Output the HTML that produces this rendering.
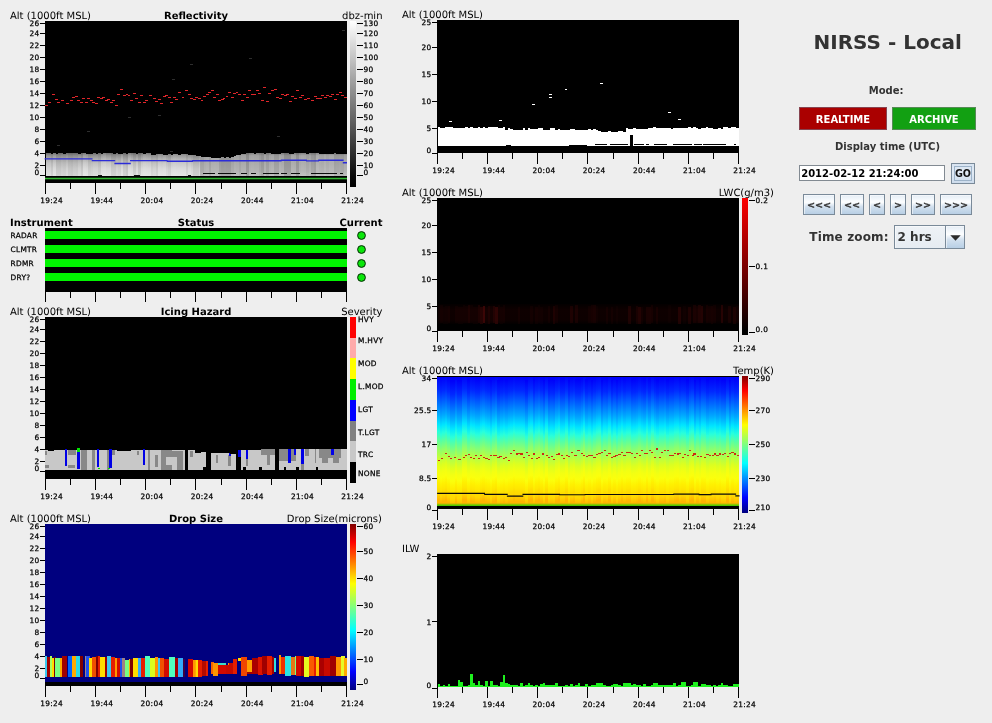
<!DOCTYPE html>
<html lang="en"><head><meta charset="utf-8"><title>NIRSS - Local</title>
<style>
html,body{margin:0;padding:0;background:#eee;}
body{width:992px;height:723px;overflow:hidden;position:relative;font-family:'DejaVu Sans','Liberation Sans',sans-serif;}
#app{position:absolute;left:0;top:0;width:992px;height:723px;background:#eee;overflow:hidden;will-change:transform;}
#plots{position:absolute;left:0;top:0;}
svg text{font-family:'DejaVu Sans','Liberation Sans',sans-serif;fill:#000;}
.tt{font-size:10px;}
.tb{font-size:10px;font-weight:bold;}
.tk{font-size:7.4px;letter-spacing:0.3px;stroke:#000;stroke-width:0.25px;}
#ctl{position:absolute;left:790px;top:0;width:202px;height:260px;color:#333;font-weight:bold;}
#ctl *{box-sizing:border-box;}
.abs{position:absolute;white-space:nowrap;}
h1.abs{margin:0;font-size:20px;line-height:24px;font-weight:bold;color:#333;}
.lbl{font-size:10px;line-height:12px;}
.mode{height:23px;border:1px solid #857585;color:#fff;font-size:10px;line-height:20px;padding-top:1.5px;text-align:center;}
.btn{border:1px solid #7a8a99;background:linear-gradient(#e4edf6 0%,#fdfeff 38%,#d2e0ee 62%,#b8cfe5 100%);
 box-shadow:inset 1px 1px 0 rgba(255,255,255,0.55);font-size:9.6px;line-height:18px;text-align:center;color:#333;font-weight:bold;padding:0;}
.nv{display:inline-block;transform:translateY(1.1px) scaleY(0.92);-webkit-text-stroke:0.3px #333;}
.go{background:linear-gradient(#d8e4f1,#e2ebf5 45%,#cddcec);box-shadow:none;color:#111;}
.tf{border:1px solid #828a92;background:#fff;font-size:10px;line-height:13px;color:#000;font-weight:bold;padding:0.9px 0 0 1.2px;}
</style></head>
<body>
<div id="app">
<svg id="plots" width="992" height="723" viewBox="0 0 992 723" shape-rendering="crispEdges" text-rendering="geometricPrecision">
<defs>
<linearGradient id="gcloud" x1="0" y1="153" x2="0" y2="175.6" gradientUnits="userSpaceOnUse">
<stop offset="0" stop-color="#6e6e6e"/><stop offset="0.1" stop-color="#929292"/><stop offset="0.25" stop-color="#aeaeae"/><stop offset="0.45" stop-color="#c8c8c8"/><stop offset="0.7" stop-color="#dadada"/><stop offset="1" stop-color="#e4e4e4"/></linearGradient>
<linearGradient id="ggrey" x1="0" y1="0" x2="0" y2="1"><stop offset="0" stop-color="#fff"/><stop offset="0.94" stop-color="#080808"/><stop offset="1" stop-color="#000"/></linearGradient>
<linearGradient id="gjet" x1="0" y1="0" x2="0" y2="1">
<stop offset="0" stop-color="#800000"/><stop offset="0.11" stop-color="#ff0000"/><stop offset="0.36" stop-color="#ffff00"/><stop offset="0.5" stop-color="#80ff80"/><stop offset="0.64" stop-color="#00ffff"/><stop offset="0.89" stop-color="#0000ff"/><stop offset="1" stop-color="#000080"/></linearGradient>
<linearGradient id="gred" x1="0" y1="0" x2="0" y2="1"><stop offset="0" stop-color="#ff0000"/><stop offset="0.97" stop-color="#000"/><stop offset="1" stop-color="#000"/></linearGradient>
<linearGradient id="glwc" x1="0" y1="0" x2="0" y2="1"><stop offset="0" stop-color="#030000"/><stop offset="0.3" stop-color="#0e0000"/><stop offset="0.8" stop-color="#0d0000"/><stop offset="1" stop-color="#040000"/></linearGradient>
<linearGradient id="gtemp" x1="0" y1="0" x2="0" y2="1"><stop offset="0.003" stop-color="#0000fa"/><stop offset="0.11" stop-color="#0028ff"/><stop offset="0.216" stop-color="#006eff"/><stop offset="0.306" stop-color="#00aaff"/><stop offset="0.382" stop-color="#00e6ff"/><stop offset="0.444" stop-color="#28ffdc"/><stop offset="0.504" stop-color="#5affa0"/><stop offset="0.565" stop-color="#8cff6e"/><stop offset="0.625" stop-color="#b4ff46"/><stop offset="0.687" stop-color="#dcff20"/><stop offset="0.745" stop-color="#f3ff12"/><stop offset="0.79" stop-color="#fbff0c"/><stop offset="0.843" stop-color="#fff000"/><stop offset="0.882" stop-color="#ffe600"/><stop offset="0.905" stop-color="#ffdc00"/><stop offset="0.93" stop-color="#ffd800"/><stop offset="0.96" stop-color="#ffc300"/><stop offset="0.98" stop-color="#ffb400"/><stop offset="1" stop-color="#ffb400"/></linearGradient>
<linearGradient id="gtempu" x1="0" y1="377.4" x2="0" y2="505" gradientUnits="userSpaceOnUse"><stop offset="0.003" stop-color="#0000fa"/><stop offset="0.11" stop-color="#0028ff"/><stop offset="0.216" stop-color="#006eff"/><stop offset="0.306" stop-color="#00aaff"/><stop offset="0.382" stop-color="#00e6ff"/><stop offset="0.444" stop-color="#28ffdc"/><stop offset="0.504" stop-color="#5affa0"/><stop offset="0.565" stop-color="#8cff6e"/><stop offset="0.625" stop-color="#b4ff46"/><stop offset="0.687" stop-color="#dcff20"/><stop offset="0.745" stop-color="#f3ff12"/><stop offset="0.79" stop-color="#fbff0c"/><stop offset="0.843" stop-color="#fff000"/><stop offset="0.882" stop-color="#ffe600"/><stop offset="0.905" stop-color="#ffdc00"/><stop offset="0.93" stop-color="#ffd800"/><stop offset="0.96" stop-color="#ffc300"/><stop offset="0.98" stop-color="#ffb400"/><stop offset="1" stop-color="#ffb400"/></linearGradient>
<clipPath id="ctemp"><rect x="437" y="377.4" width="302" height="127.6"/></clipPath>
<linearGradient id="ggf" x1="0" y1="0" x2="0" y2="1"><stop offset="0" stop-color="#78c800" stop-opacity="0"/><stop offset="1" stop-color="#64c800" stop-opacity="1"/></linearGradient>
<clipPath id="cc1"><rect x="45" y="140" width="155" height="40"/></clipPath><clipPath id="cc2"><rect x="200" y="140" width="147" height="40"/></clipPath>
<linearGradient id="gcloud2" x1="0" y1="153" x2="0" y2="175.6" gradientUnits="userSpaceOnUse">
<stop offset="0" stop-color="#7c7c7c"/><stop offset="0.12" stop-color="#a2a2a2"/><stop offset="0.4" stop-color="#aaaaaa"/><stop offset="0.8" stop-color="#b4b4b4"/><stop offset="1" stop-color="#c0c0c0"/></linearGradient>
</defs>
<g id="p1"><text class="tt" text-anchor="start" x="10" y="18.8">Alt (1000ft MSL)</text><text class="tb" text-anchor="middle" x="196" y="18.8">Reflectivity</text><text class="tt" text-anchor="end" x="382.5" y="18.8">dbz-min</text><rect x="45" y="21" width="302" height="161.5" fill="#000"/><polygon points="45.5,175.6 45.5,153.22 48.01,153.22 48.01,152.94 50.52,152.94 50.52,153.74 53.02,153.74 53.02,152.82 55.53,152.82 55.53,153.56 58.04,153.56 58.04,153.29 60.55,153.29 60.55,152.79 63.06,152.79 63.06,153.51 65.57,153.51 65.57,152.76 68.08,152.76 68.08,153.39 70.58,153.39 70.58,152.81 73.09,152.81 73.09,152.85 75.6,152.85 75.6,153.38 78.11,153.38 78.11,154.02 80.62,154.02 80.62,152.9 83.13,152.9 83.12,153.06 85.63,153.06 85.63,153.7 88.14,153.7 88.14,154.22 90.65,154.22 90.65,153.62 93.16,153.62 93.16,153.33 95.67,153.33 95.67,154.26 98.17,154.26 98.17,152.77 100.68,152.77 100.68,154.07 103.19,154.07 103.19,153.16 105.7,153.16 105.7,152.93 108.21,152.93 108.21,152.89 110.72,152.89 110.72,153.19 113.23,153.19 113.22,154.01 115.73,154.01 115.73,152.99 118.24,152.99 118.24,153.63 120.75,153.63 120.75,153.72 123.26,153.72 123.26,153.3 125.77,153.3 125.77,153.58 128.28,153.58 128.28,152.8 130.78,152.8 130.78,152.8 133.29,152.8 133.29,153.03 135.8,153.03 135.8,153.79 138.31,153.79 138.31,153.38 140.82,153.38 140.82,153.2 143.32,153.2 143.32,153.64 145.83,153.64 145.83,153.43 148.34,153.43 148.34,153.18 150.85,153.18 150.85,154.77 153.36,154.77 153.36,154.62 155.87,154.62 155.87,153.89 158.38,153.89 158.38,154.42 160.88,154.42 160.88,154.34 163.39,154.34 163.39,154.9 165.9,154.9 165.9,154.67 168.41,154.67 168.41,153.96 170.92,153.96 170.92,155.07 173.43,155.07 173.43,153.69 175.93,153.69 175.93,154.17 178.44,154.17 178.44,154.71 180.95,154.71 180.95,153.74 183.46,153.74 183.46,154.28 185.97,154.28 185.97,153.56 188.47,153.56 188.47,154.77 190.98,154.77 190.98,155.3 193.49,155.3 193.49,155.41 196,155.41 196,156.31 198.51,156.31 198.51,155.83 201.02,155.83 201.02,156.82 203.52,156.82 203.53,157.01 206.03,157.01 206.03,157.28 208.54,157.28 208.54,157.33 211.05,157.33 211.05,158.11 213.56,158.11 213.56,158.38 216.07,158.38 216.07,157.66 218.57,157.66 218.57,157.91 221.08,157.91 221.08,156.83 223.59,156.83 223.59,157.66 226.1,157.66 226.1,157.32 228.61,157.32 228.61,157.56 231.12,157.56 231.12,156.93 233.62,156.93 233.62,155.67 236.13,155.67 236.13,155.42 238.64,155.42 238.64,155.45 241.15,155.45 241.15,154.01 243.66,154.01 243.66,154.35 246.17,154.35 246.17,152.97 248.67,152.97 248.68,152.89 251.18,152.89 251.18,152.79 253.69,152.79 253.69,153.93 256.2,153.93 256.2,152.91 258.71,152.91 258.71,153.1 261.22,153.1 261.22,153.33 263.73,153.33 263.73,154.09 266.23,154.09 266.23,152.83 268.74,152.83 268.74,153.42 271.25,153.42 271.25,153.58 273.76,153.58 273.76,154.11 276.27,154.11 276.27,154.01 278.77,154.01 278.77,154.08 281.28,154.08 281.28,153.15 283.79,153.15 283.79,153.36 286.3,153.36 286.3,153.27 288.81,153.27 288.81,154.11 291.32,154.11 291.32,154.23 293.82,154.23 293.82,152.94 296.33,152.94 296.33,152.98 298.84,152.98 298.84,153.07 301.35,153.07 301.35,153.07 303.86,153.07 303.86,153.48 306.37,153.48 306.37,153.64 308.88,153.64 308.88,153.12 311.38,153.12 311.38,152.71 313.89,152.71 313.89,153.37 316.4,153.37 316.4,153.29 318.91,153.29 318.91,153.61 321.42,153.61 321.42,154.22 323.93,154.22 323.93,153.8 326.43,153.8 326.43,153.52 328.94,153.52 328.94,153.69 331.45,153.69 331.45,153.78 333.96,153.78 333.96,152.79 336.47,152.79 336.47,154.14 338.97,154.14 338.98,153.95 341.48,153.95 341.48,154.1 343.99,154.1 343.99,153.98 346.5,153.98 346.5,175.6" fill="url(#gcloud)" clip-path="url(#cc1)"/><polygon points="45.5,175.6 45.5,153.22 48.01,153.22 48.01,152.94 50.52,152.94 50.52,153.74 53.02,153.74 53.02,152.82 55.53,152.82 55.53,153.56 58.04,153.56 58.04,153.29 60.55,153.29 60.55,152.79 63.06,152.79 63.06,153.51 65.57,153.51 65.57,152.76 68.08,152.76 68.08,153.39 70.58,153.39 70.58,152.81 73.09,152.81 73.09,152.85 75.6,152.85 75.6,153.38 78.11,153.38 78.11,154.02 80.62,154.02 80.62,152.9 83.13,152.9 83.12,153.06 85.63,153.06 85.63,153.7 88.14,153.7 88.14,154.22 90.65,154.22 90.65,153.62 93.16,153.62 93.16,153.33 95.67,153.33 95.67,154.26 98.17,154.26 98.17,152.77 100.68,152.77 100.68,154.07 103.19,154.07 103.19,153.16 105.7,153.16 105.7,152.93 108.21,152.93 108.21,152.89 110.72,152.89 110.72,153.19 113.23,153.19 113.22,154.01 115.73,154.01 115.73,152.99 118.24,152.99 118.24,153.63 120.75,153.63 120.75,153.72 123.26,153.72 123.26,153.3 125.77,153.3 125.77,153.58 128.28,153.58 128.28,152.8 130.78,152.8 130.78,152.8 133.29,152.8 133.29,153.03 135.8,153.03 135.8,153.79 138.31,153.79 138.31,153.38 140.82,153.38 140.82,153.2 143.32,153.2 143.32,153.64 145.83,153.64 145.83,153.43 148.34,153.43 148.34,153.18 150.85,153.18 150.85,154.77 153.36,154.77 153.36,154.62 155.87,154.62 155.87,153.89 158.38,153.89 158.38,154.42 160.88,154.42 160.88,154.34 163.39,154.34 163.39,154.9 165.9,154.9 165.9,154.67 168.41,154.67 168.41,153.96 170.92,153.96 170.92,155.07 173.43,155.07 173.43,153.69 175.93,153.69 175.93,154.17 178.44,154.17 178.44,154.71 180.95,154.71 180.95,153.74 183.46,153.74 183.46,154.28 185.97,154.28 185.97,153.56 188.47,153.56 188.47,154.77 190.98,154.77 190.98,155.3 193.49,155.3 193.49,155.41 196,155.41 196,156.31 198.51,156.31 198.51,155.83 201.02,155.83 201.02,156.82 203.52,156.82 203.53,157.01 206.03,157.01 206.03,157.28 208.54,157.28 208.54,157.33 211.05,157.33 211.05,158.11 213.56,158.11 213.56,158.38 216.07,158.38 216.07,157.66 218.57,157.66 218.57,157.91 221.08,157.91 221.08,156.83 223.59,156.83 223.59,157.66 226.1,157.66 226.1,157.32 228.61,157.32 228.61,157.56 231.12,157.56 231.12,156.93 233.62,156.93 233.62,155.67 236.13,155.67 236.13,155.42 238.64,155.42 238.64,155.45 241.15,155.45 241.15,154.01 243.66,154.01 243.66,154.35 246.17,154.35 246.17,152.97 248.67,152.97 248.68,152.89 251.18,152.89 251.18,152.79 253.69,152.79 253.69,153.93 256.2,153.93 256.2,152.91 258.71,152.91 258.71,153.1 261.22,153.1 261.22,153.33 263.73,153.33 263.73,154.09 266.23,154.09 266.23,152.83 268.74,152.83 268.74,153.42 271.25,153.42 271.25,153.58 273.76,153.58 273.76,154.11 276.27,154.11 276.27,154.01 278.77,154.01 278.77,154.08 281.28,154.08 281.28,153.15 283.79,153.15 283.79,153.36 286.3,153.36 286.3,153.27 288.81,153.27 288.81,154.11 291.32,154.11 291.32,154.23 293.82,154.23 293.82,152.94 296.33,152.94 296.33,152.98 298.84,152.98 298.84,153.07 301.35,153.07 301.35,153.07 303.86,153.07 303.86,153.48 306.37,153.48 306.37,153.64 308.88,153.64 308.88,153.12 311.38,153.12 311.38,152.71 313.89,152.71 313.89,153.37 316.4,153.37 316.4,153.29 318.91,153.29 318.91,153.61 321.42,153.61 321.42,154.22 323.93,154.22 323.93,153.8 326.43,153.8 326.43,153.52 328.94,153.52 328.94,153.69 331.45,153.69 331.45,153.78 333.96,153.78 333.96,152.79 336.47,152.79 336.47,154.14 338.97,154.14 338.98,153.95 341.48,153.95 341.48,154.1 343.99,154.1 343.99,153.98 346.5,153.98 346.5,175.6" fill="url(#gcloud2)" clip-path="url(#cc2)"/><rect x="45.5" y="153.22" width="2.51" height="22.38" fill="#000" opacity="0.02"/><rect x="48.01" y="152.94" width="2.51" height="22.66" fill="#000" opacity="0.02"/><rect x="50.52" y="153.74" width="2.51" height="21.86" fill="#000" opacity="0.08"/><rect x="53.02" y="152.82" width="2.51" height="22.78" fill="#fff" opacity="0.03"/><rect x="55.53" y="153.56" width="2.51" height="22.04" fill="#000" opacity="0.09"/><rect x="58.04" y="153.29" width="2.51" height="22.31" fill="#000" opacity="0.09"/><rect x="60.55" y="152.79" width="2.51" height="22.81" fill="#000" opacity="0.06"/><rect x="63.06" y="153.51" width="2.51" height="22.09" fill="#000" opacity="0.07"/><rect x="65.57" y="152.76" width="2.51" height="22.84" fill="#000" opacity="0.03"/><rect x="68.08" y="153.39" width="2.51" height="22.21" fill="#000" opacity="0.09"/><rect x="70.58" y="152.81" width="2.51" height="22.79" fill="#000" opacity="0.1"/><rect x="73.09" y="152.85" width="2.51" height="22.75" fill="#000" opacity="0.07"/><rect x="75.6" y="153.38" width="2.51" height="22.22" fill="#000" opacity="0.08"/><rect x="78.11" y="154.02" width="2.51" height="21.58" fill="#000" opacity="0.03"/><rect x="80.62" y="152.9" width="2.51" height="22.7" fill="#000" opacity="0.09"/><rect x="83.12" y="153.06" width="2.51" height="22.54" fill="#fff" opacity="0.07"/><rect x="85.63" y="153.7" width="2.51" height="21.9" fill="#fff" opacity="0.02"/><rect x="88.14" y="154.22" width="2.51" height="21.38" fill="#000" opacity="0.07"/><rect x="90.65" y="153.62" width="2.51" height="21.98" fill="#000" opacity="0.05"/><rect x="93.16" y="153.33" width="2.51" height="22.27" fill="#000" opacity="0.03"/><rect x="95.67" y="154.26" width="2.51" height="21.34" fill="#000" opacity="0.03"/><rect x="98.17" y="152.77" width="2.51" height="22.83" fill="#000" opacity="0.08"/><rect x="100.68" y="154.07" width="2.51" height="21.53" fill="#fff" opacity="0.07"/><rect x="103.19" y="153.16" width="2.51" height="22.44" fill="#fff" opacity="0.1"/><rect x="110.72" y="153.19" width="2.51" height="22.41" fill="#000" opacity="0.08"/><rect x="113.22" y="154.01" width="2.51" height="21.59" fill="#000" opacity="0.08"/><rect x="115.73" y="152.99" width="2.51" height="22.61" fill="#000" opacity="0.03"/><rect x="118.24" y="153.63" width="2.51" height="21.97" fill="#000" opacity="0.05"/><rect x="120.75" y="153.72" width="2.51" height="21.88" fill="#fff" opacity="0.07"/><rect x="123.26" y="153.3" width="2.51" height="22.3" fill="#000" opacity="0.07"/><rect x="125.77" y="153.58" width="2.51" height="22.02" fill="#000" opacity="0.1"/><rect x="128.28" y="152.8" width="2.51" height="22.8" fill="#fff" opacity="0.09"/><rect x="133.29" y="153.03" width="2.51" height="22.57" fill="#000" opacity="0.07"/><rect x="138.31" y="153.38" width="2.51" height="22.22" fill="#000" opacity="0.09"/><rect x="143.32" y="153.64" width="2.51" height="21.96" fill="#fff" opacity="0.1"/><rect x="145.83" y="153.43" width="2.51" height="22.17" fill="#fff" opacity="0.07"/><rect x="148.34" y="153.18" width="2.51" height="22.42" fill="#fff" opacity="0.04"/><rect x="150.85" y="154.77" width="2.51" height="20.83" fill="#000" opacity="0.05"/><rect x="153.36" y="154.62" width="2.51" height="20.98" fill="#000" opacity="0.03"/><rect x="155.87" y="153.89" width="2.51" height="21.71" fill="#000" opacity="0.07"/><rect x="158.38" y="154.42" width="2.51" height="21.18" fill="#fff" opacity="0.05"/><rect x="163.39" y="154.9" width="2.51" height="20.7" fill="#fff" opacity="0.06"/><rect x="165.9" y="154.67" width="2.51" height="20.93" fill="#000" opacity="0.03"/><rect x="168.41" y="153.96" width="2.51" height="21.64" fill="#000" opacity="0.06"/><rect x="170.92" y="155.07" width="2.51" height="20.53" fill="#fff" opacity="0.06"/><rect x="173.43" y="153.69" width="2.51" height="21.91" fill="#fff" opacity="0.1"/><rect x="175.93" y="154.17" width="2.51" height="21.43" fill="#fff" opacity="0.07"/><rect x="178.44" y="154.71" width="2.51" height="20.89" fill="#fff" opacity="0.06"/><rect x="180.95" y="153.74" width="2.51" height="21.86" fill="#fff" opacity="0.06"/><rect x="183.46" y="154.28" width="2.51" height="21.32" fill="#fff" opacity="0.05"/><rect x="185.97" y="153.56" width="2.51" height="22.04" fill="#000" opacity="0.05"/><rect x="190.98" y="155.3" width="2.51" height="20.3" fill="#000" opacity="0.03"/><rect x="193.49" y="155.41" width="2.51" height="20.19" fill="#000" opacity="0.09"/><rect x="196" y="156.31" width="2.51" height="19.29" fill="#000" opacity="0.09"/><rect x="198.51" y="155.83" width="2.51" height="19.77" fill="#000" opacity="0.04"/><rect x="201.02" y="156.82" width="2.51" height="18.78" fill="#000" opacity="0.05"/><rect x="206.03" y="157.28" width="2.51" height="18.32" fill="#fff" opacity="0.04"/><rect x="208.54" y="157.33" width="2.51" height="18.27" fill="#000" opacity="0.06"/><rect x="211.05" y="158.11" width="2.51" height="17.49" fill="#fff" opacity="0.04"/><rect x="213.56" y="158.38" width="2.51" height="17.22" fill="#fff" opacity="0.05"/><rect x="216.07" y="157.66" width="2.51" height="17.94" fill="#fff" opacity="0.04"/><rect x="218.57" y="157.91" width="2.51" height="17.69" fill="#000" opacity="0.08"/><rect x="221.08" y="156.83" width="2.51" height="18.77" fill="#000" opacity="0.11"/><rect x="223.59" y="157.66" width="2.51" height="17.94" fill="#000" opacity="0.1"/><rect x="226.1" y="157.32" width="2.51" height="18.28" fill="#000" opacity="0.11"/><rect x="228.61" y="157.56" width="2.51" height="18.04" fill="#000" opacity="0.11"/><rect x="231.12" y="156.93" width="2.51" height="18.67" fill="#000" opacity="0.03"/><rect x="233.62" y="155.67" width="2.51" height="19.93" fill="#fff" opacity="0.03"/><rect x="238.64" y="155.45" width="2.51" height="20.15" fill="#000" opacity="0.05"/><rect x="246.17" y="152.97" width="2.51" height="22.63" fill="#000" opacity="0.13"/><rect x="251.18" y="152.79" width="2.51" height="22.81" fill="#fff" opacity="0.03"/><rect x="258.71" y="153.1" width="2.51" height="22.5" fill="#000" opacity="0.05"/><rect x="261.22" y="153.33" width="2.51" height="22.27" fill="#000" opacity="0.11"/><rect x="266.23" y="152.83" width="2.51" height="22.77" fill="#000" opacity="0.08"/><rect x="271.25" y="153.58" width="2.51" height="22.02" fill="#fff" opacity="0.04"/><rect x="273.76" y="154.11" width="2.51" height="21.49" fill="#000" opacity="0.07"/><rect x="276.27" y="154.01" width="2.51" height="21.59" fill="#000" opacity="0.07"/><rect x="278.77" y="154.08" width="2.51" height="21.52" fill="#fff" opacity="0.04"/><rect x="283.79" y="153.36" width="2.51" height="22.24" fill="#000" opacity="0.12"/><rect x="286.3" y="153.27" width="2.51" height="22.33" fill="#000" opacity="0.12"/><rect x="288.81" y="154.11" width="2.51" height="21.49" fill="#000" opacity="0.12"/><rect x="291.32" y="154.23" width="2.51" height="21.37" fill="#fff" opacity="0.03"/><rect x="296.33" y="152.98" width="2.51" height="22.62" fill="#000" opacity="0.12"/><rect x="301.35" y="153.07" width="2.51" height="22.53" fill="#fff" opacity="0.05"/><rect x="303.86" y="153.48" width="2.51" height="22.12" fill="#fff" opacity="0.03"/><rect x="306.37" y="153.64" width="2.51" height="21.96" fill="#000" opacity="0.03"/><rect x="311.38" y="152.71" width="2.51" height="22.89" fill="#000" opacity="0.07"/><rect x="313.89" y="153.37" width="2.51" height="22.23" fill="#000" opacity="0.1"/><rect x="316.4" y="153.29" width="2.51" height="22.31" fill="#fff" opacity="0.09"/><rect x="318.91" y="153.61" width="2.51" height="21.99" fill="#fff" opacity="0.03"/><rect x="323.93" y="153.8" width="2.51" height="21.8" fill="#fff" opacity="0.09"/><rect x="328.94" y="153.69" width="2.51" height="21.91" fill="#fff" opacity="0.07"/><rect x="331.45" y="153.78" width="2.51" height="21.82" fill="#fff" opacity="0.07"/><rect x="333.96" y="152.79" width="2.51" height="22.81" fill="#000" opacity="0.06"/><rect x="336.47" y="154.14" width="2.51" height="21.46" fill="#000" opacity="0.05"/><rect x="338.98" y="153.95" width="2.51" height="21.65" fill="#000" opacity="0.04"/><rect x="341.48" y="154.1" width="2.51" height="21.5" fill="#000" opacity="0.05"/><rect x="202.7" y="172.6" width="12.3" height="1.1" fill="#0c0c0c"/><rect x="218" y="172.6" width="18" height="1.1" fill="#0c0c0c"/><rect x="241" y="172.6" width="6" height="1.1" fill="#0c0c0c"/><rect x="251" y="172.6" width="5" height="1.1" fill="#0c0c0c"/><rect x="263" y="172.6" width="16" height="1.1" fill="#0c0c0c"/><rect x="281" y="172.6" width="6" height="1.1" fill="#0c0c0c"/><rect x="291" y="172.6" width="9" height="1.1" fill="#0c0c0c"/><rect x="311" y="172.6" width="26" height="1.1" fill="#0c0c0c"/><rect x="340" y="172.6" width="3" height="1.1" fill="#0c0c0c"/><rect x="98" y="174.6" width="4" height="1.1" fill="#111"/><rect x="134" y="174.6" width="6" height="1.1" fill="#111"/><rect x="188" y="174.6" width="3" height="1.1" fill="#111"/><path d="M44.6 158.9H92.5M91.7 160.6H115.2M114.4 163.5H130.8M130 160.6H167.6M166.8 161.2H192.9M192.1 160.8H281.6M280.8 160.2H306.9M306.1 160.9H319M318.2 160.2H343.6M342.8 162.8H347" stroke="#2c2cd8" stroke-width="1.4" fill="none" shape-rendering="geometricPrecision"/><path d="M45.23 105.28h2.6M48.3 102.53h2.6M52.13 94.56h2.6M55.19 99.46h2.6M57.18 102.53h2.6M61.02 100.38h2.6M65.92 103.44h2.6M70.06 100.38h2.6M72.35 97.32h2.6M75.11 96.4h2.6M77.1 100.38h2.6M80.02 102.53h2.6M82.01 98.39h2.6M85.07 102.53h2.6M87.07 98.39h2.6M90.13 100.38h2.6M92.43 102.53h2.6M95.03 103.44h2.6M97.33 97.32h2.6M100.09 98.39h2.6M101.93 97.32h2.6M104.99 100.38h2.6M106.99 99.46h2.6M110.05 102.53h2.6M112.2 100.38h2.6M115.26 105.28h2.6M117.25 94.56h2.6M120.16 89.5h2.6M123.07 95.32h2.6M125.68 94.56h2.6M127.67 95.32h2.6M130.28 100.38h2.6M133.03 93.48h2.6M135.18 98.39h2.6M138.24 102.53h2.6M140.24 95.32h2.6M143.3 102.53h2.6M145.29 100.38h2.6M149.12 95.32h2.6M153.26 98.39h2.6M155.25 101.45h2.6M158.17 99.46h2.6M160.16 103.44h2.6M163.22 96.4h2.6M165.21 95.32h2.6M168.13 97.32h2.6M170.12 102.53h2.6M173.18 97.32h2.6M175.17 99.46h2.6M178.09 92.57h2.6M181.61 97.32h2.6M184.98 90.42h2.6M188.05 94.56h2.6M190.34 98.39h2.6M193.1 99.46h2.6M195.23 97.32h2.6M197.99 98.39h2.6M200.6 100.38h2.6M203.2 96.4h2.6M205.96 94.56h2.6M208.26 92.57h2.6M211.02 90.42h2.6M213.31 97.32h2.6M215.92 94.56h2.6M218.22 100.38h2.6M220.98 99.46h2.6M222.81 98.39h2.6M225.88 96.4h2.6M228.18 92.57h2.6M230.94 97.32h2.6M233.23 93.48h2.6M235.84 92.57h2.6M238.14 94.56h2.6M241.2 100.38h2.6M243.19 94.56h2.6M246.26 97.32h2.6M248.1 90.42h2.6M251.16 94.56h2.6M253.15 94.56h2.6M256.22 90.42h2.6M258.06 93.48h2.6M261.12 100.38h2.6M263.11 87.36h2.6M266.03 101.45h2.6M268.32 93.48h2.6M271.08 90.42h2.6M274.15 89.5h2.6M276.45 97.32h2.6M279.05 98.39h2.6M281.04 94.56h2.6M284.11 95.32h2.6M286.1 94.56h2.6M289.01 101.45h2.6M291.31 96.4h2.6M294.07 98.39h2.6M296.37 90.42h2.6M299.12 97.32h2.6M300.96 95.32h2.6M304.03 99.46h2.6M307.09 98.85h2.6M311.38 100.38h2.6M313.99 96.4h2.6M316.29 98.39h2.6M319.04 98.39h2.6M321.19 95.32h2.6M323.95 97.32h2.6M326.25 95.32h2.6M329 96.4h2.6M331.3 94.56h2.6M334.37 99.46h2.6M336.21 94.56h2.6M338.97 92.57h2.6M341.26 95.32h2.6M344.33 97.32h2.6" stroke="#e0262a" stroke-width="1.1" fill="none"/><rect x="341.5" y="30" width="3" height="1" fill="#2e2e2e"/><rect x="190" y="64" width="3" height="1" fill="#2e2e2e"/><rect x="249" y="57.5" width="3" height="1" fill="#2e2e2e"/><rect x="172" y="78.5" width="3" height="1" fill="#2e2e2e"/><rect x="128" y="117" width="3" height="1" fill="#2e2e2e"/><rect x="158" y="115" width="3" height="1" fill="#2e2e2e"/><rect x="86.5" y="131" width="3" height="1" fill="#2e2e2e"/><rect x="57" y="145" width="3" height="1" fill="#2e2e2e"/><rect x="277" y="136" width="3" height="1" fill="#2e2e2e"/><rect x="170" y="151" width="3" height="1" fill="#2e2e2e"/><rect x="45" y="177" width="302" height="1" fill="#0c300c"/><rect x="45" y="178" width="302" height="1" fill="#36b836"/><rect x="45" y="179" width="302" height="1" fill="#0f420f"/><rect x="350" y="21" width="6" height="165.5" fill="url(#ggrey)"/><g class="ax"><path d="M357 23.5h6.4M357 33.5h6.4M357 45.5h6.4M357 57.5h6.4M357 69.5h6.4M357 81.5h6.4M357 93.5h6.4M357 105.5h6.4M357 117.5h6.4M357 129.5h6.4M357 141.5h6.4M357 153.5h6.4M357 165.5h6.4M357 175.5h6.4" stroke="#000" stroke-width="1" fill="none"/><text class="tk" x="363.5" y="26.2">130</text><text class="tk" x="363.5" y="36.2">120</text><text class="tk" x="363.5" y="48.2">110</text><text class="tk" x="363.5" y="60.2">100</text><text class="tk" x="363.5" y="72.2">90</text><text class="tk" x="363.5" y="84.2">80</text><text class="tk" x="363.5" y="96.2">70</text><text class="tk" x="363.5" y="108.2">60</text><text class="tk" x="363.5" y="120.2">50</text><text class="tk" x="363.5" y="132.2">40</text><text class="tk" x="363.5" y="144.2">30</text><text class="tk" x="363.5" y="156.2">20</text><text class="tk" x="363.5" y="168.2">10</text><text class="tk" x="363.5" y="175">0</text></g><g class="ax"><path d="M39.7 23.5h5.3M39.7 33.5h5.3M39.7 45.5h5.3M39.7 57.5h5.3M39.7 69.5h5.3M39.7 81.5h5.3M39.7 93.5h5.3M39.7 105.5h5.3M39.7 117.5h5.3M39.7 129.5h5.3M39.7 141.5h5.3M39.7 153.5h5.3M39.7 165.5h5.3M39.7 175.5h5.3" stroke="#000" stroke-width="1" fill="none"/><text class="tk" text-anchor="end" x="39.6" y="26.2">26</text><text class="tk" text-anchor="end" x="39.6" y="36.2">24</text><text class="tk" text-anchor="end" x="39.6" y="48.2">22</text><text class="tk" text-anchor="end" x="39.6" y="60.2">20</text><text class="tk" text-anchor="end" x="39.6" y="72.2">18</text><text class="tk" text-anchor="end" x="39.6" y="84.2">16</text><text class="tk" text-anchor="end" x="39.6" y="96.2">14</text><text class="tk" text-anchor="end" x="39.6" y="108.2">12</text><text class="tk" text-anchor="end" x="39.6" y="120.2">10</text><text class="tk" text-anchor="end" x="39.6" y="132.2">8</text><text class="tk" text-anchor="end" x="39.6" y="144.2">6</text><text class="tk" text-anchor="end" x="39.6" y="156.2">4</text><text class="tk" text-anchor="end" x="39.6" y="168.2">2</text><text class="tk" text-anchor="end" x="39.6" y="175">0</text></g><g class="ax"><path d="M45.5 182.5v11M70.5 182.5v6M95.5 182.5v11M120.5 182.5v6M145.5 182.5v11M170.5 182.5v6M195.5 182.5v11M221.5 182.5v6M246.5 182.5v11M271.5 182.5v6M296.5 182.5v11M321.5 182.5v6M346.5 182.5v11" stroke="#000" stroke-width="1" fill="none"/><text class="tk" x="40.3" y="202.9">19:24</text><text class="tk" x="90.46" y="202.9">19:44</text><text class="tk" x="140.62" y="202.9">20:04</text><text class="tk" x="190.78" y="202.9">20:24</text><text class="tk" x="240.94" y="202.9">20:44</text><text class="tk" x="291.1" y="202.9">21:04</text><text class="tk" x="341.26" y="202.9">21:24</text></g></g>
<g id="p2"><text class="tb" text-anchor="start" x="10" y="225.8">Instrument</text><text class="tb" text-anchor="middle" x="196" y="225.8">Status</text><text class="tb" text-anchor="end" x="382.5" y="225.8">Current</text><rect x="45" y="228" width="302" height="63.6" fill="#000"/><rect x="45" y="231" width="302" height="8" fill="#00f500"/><text class="tk" x="10.5" y="237.6">RADAR</text><circle cx="361.5" cy="235.5" r="3.9" fill="#0ae60a" stroke="#062806" stroke-width="1" shape-rendering="geometricPrecision"/><rect x="45" y="245" width="302" height="8" fill="#00f500"/><text class="tk" x="10.5" y="251.6">CLMTR</text><circle cx="361.5" cy="249.5" r="3.9" fill="#0ae60a" stroke="#062806" stroke-width="1" shape-rendering="geometricPrecision"/><rect x="45" y="259" width="302" height="8" fill="#00f500"/><text class="tk" x="10.5" y="265.6">RDMR</text><circle cx="361.5" cy="263.5" r="3.9" fill="#0ae60a" stroke="#062806" stroke-width="1" shape-rendering="geometricPrecision"/><rect x="45" y="273" width="302" height="8" fill="#00f500"/><text class="tk" x="10.5" y="279.6">DRY?</text><circle cx="361.5" cy="277.5" r="3.9" fill="#0ae60a" stroke="#062806" stroke-width="1" shape-rendering="geometricPrecision"/><path d="M45.5 291.6v10.4M70.5 291.6v6.4M95.5 291.6v10.4M120.5 291.6v6.4M145.5 291.6v10.4M170.5 291.6v6.4M195.5 291.6v10.4M221.5 291.6v6.4M246.5 291.6v10.4M271.5 291.6v6.4M296.5 291.6v10.4M321.5 291.6v6.4M346.5 291.6v10.4" stroke="#000" stroke-width="1" fill="none"/></g>
<g id="p3"><text class="tt" text-anchor="start" x="10" y="314.6">Alt (1000ft MSL)</text><text class="tb" text-anchor="middle" x="196" y="314.6">Icing Hazard</text><text class="tt" text-anchor="end" x="382.5" y="314.6">Severity</text><rect x="45" y="317" width="302" height="161.5" fill="#000"/><rect x="45" y="449.96" width="140.21" height="20.07" fill="#c8c8c8"/><rect x="188.27" y="450.42" width="8.73" height="19.61" fill="#c8c8c8"/><rect x="45" y="450.73" width="1.84" height="4.6" fill="#888"/><rect x="45" y="465.28" width="3.83" height="2.3" fill="#888"/><rect x="64.92" y="449.19" width="2.3" height="16.86" fill="#0000e6"/><rect x="67.98" y="449.96" width="7.66" height="5.36" fill="#888"/><rect x="67.98" y="464.52" width="6.9" height="3.83" fill="#888"/><rect x="76.87" y="452.26" width="3.37" height="16.86" fill="#0000e6"/><rect x="76.87" y="447.97" width="3.37" height="4.29" fill="#00e600"/><rect x="81.01" y="449.96" width="6.13" height="20.07" fill="#888"/><rect x="91.74" y="449.96" width="3.06" height="20.07" fill="#888"/><rect x="97.1" y="449.19" width="2.3" height="17.62" fill="#0000e6"/><rect x="107.06" y="449.96" width="2.3" height="20.07" fill="#888"/><rect x="109.36" y="449.19" width="2.6" height="19.15" fill="#0000e6"/><rect x="111.96" y="449.96" width="2.76" height="5.36" fill="#888"/><rect x="97.87" y="468.04" width="2.3" height="1.38" fill="#00e600"/><rect x="107.83" y="468.04" width="2.3" height="1.38" fill="#00e600"/><rect x="136.94" y="450.73" width="2.3" height="3.83" fill="#888"/><rect x="143.07" y="449.19" width="1.84" height="15.32" fill="#0000e6"/><rect x="147.67" y="449.96" width="1.84" height="20.07" fill="#888"/><rect x="154.56" y="454.56" width="3.06" height="12.26" fill="#888"/><rect x="161.46" y="450.42" width="10.73" height="19.61" fill="#888"/><rect x="166.05" y="456.86" width="6.13" height="8.43" fill="#c8c8c8"/><rect x="172.18" y="451.49" width="10.73" height="5.36" fill="#888"/><rect x="176.78" y="451.49" width="6.13" height="18.54" fill="#888"/><rect x="189.81" y="451.49" width="3.06" height="5.36" fill="#888"/><rect x="67.98" y="468.5" width="44.44" height="0.92" fill="#0000e6"/><rect x="154.56" y="468.5" width="22.22" height="0.92" fill="#0000e6"/><rect x="117.02" y="449.96" width="13.79" height="1.07" fill="#000"/><rect x="48.06" y="449.96" width="6.13" height="0.61" fill="#000"/><rect x="195" y="451.95" width="11.49" height="18.08" fill="#c8c8c8"/><rect x="211.09" y="453.48" width="24.52" height="16.55" fill="#c8c8c8"/><rect x="240.97" y="450.42" width="34.48" height="19.61" fill="#c8c8c8"/><rect x="279.28" y="449.19" width="67.73" height="20.84" fill="#c8c8c8"/><rect x="216.45" y="454.56" width="1.53" height="8.43" fill="#888"/><rect x="227.95" y="455.32" width="3.06" height="10.73" fill="#888"/><rect x="228.71" y="453.02" width="2.3" height="3.06" fill="#0000e6"/><rect x="238.37" y="449.96" width="2.6" height="6.9" fill="#0000e6"/><rect x="245.87" y="449.96" width="1.99" height="9.19" fill="#0000e6"/><rect x="245.87" y="459.15" width="1.99" height="6.9" fill="#888"/><rect x="260.89" y="449.19" width="14.56" height="6.13" fill="#888"/><rect x="267.02" y="455.32" width="3.06" height="9.19" fill="#888"/><rect x="279.28" y="449.19" width="9.19" height="12.26" fill="#888"/><rect x="288.47" y="449.19" width="2.3" height="13.79" fill="#0000e6"/><rect x="290.77" y="449.19" width="5.36" height="12.26" fill="#888"/><rect x="293.84" y="449.19" width="2.3" height="6.13" fill="#0000e6"/><rect x="300.73" y="449.19" width="3.37" height="14.56" fill="#0000e6"/><rect x="300.73" y="463.75" width="3.37" height="6.28" fill="#888"/><rect x="304.56" y="449.19" width="4.6" height="6.9" fill="#888"/><rect x="314.52" y="449.19" width="1.53" height="13.79" fill="#888"/><rect x="319.12" y="449.19" width="21.45" height="9.19" fill="#888"/><rect x="322.18" y="458.39" width="6.13" height="4.6" fill="#888"/><rect x="332.91" y="458.39" width="6.13" height="4.6" fill="#888"/><rect x="331.07" y="449.19" width="2.6" height="5.36" fill="#0000e6"/><rect x="203.43" y="466.82" width="2.3" height="3.22" fill="#000"/><rect x="243.27" y="466.82" width="2.3" height="3.22" fill="#000"/><rect x="259.36" y="466.82" width="3.06" height="3.22" fill="#000"/><rect x="283.88" y="466.82" width="2.3" height="3.22" fill="#000"/><rect x="296.13" y="466.82" width="3.06" height="3.22" fill="#000"/><rect x="316.05" y="466.82" width="2.3" height="3.22" fill="#000"/><rect x="230.24" y="450.42" width="5.36" height="3.68" fill="#000"/><rect x="195" y="450.42" width="6.13" height="2.15" fill="#000"/><rect x="350.3" y="317" width="5.8" height="20.8" fill="#ff0000"/><rect x="350.3" y="337.7" width="5.8" height="20.8" fill="#ffaaaa"/><rect x="350.3" y="358.4" width="5.8" height="20.8" fill="#ffff00"/><rect x="350.3" y="379.1" width="5.8" height="20.8" fill="#00ee00"/><rect x="350.3" y="399.8" width="5.8" height="20.8" fill="#0000ff"/><rect x="350.3" y="420.5" width="5.8" height="20.8" fill="#808080"/><rect x="350.3" y="441.2" width="5.8" height="20.8" fill="#c8c8c8"/><rect x="350.3" y="461.9" width="5.8" height="20.8" fill="#000"/><text class="tk" x="358" y="322">HVY</text><text class="tk" x="358" y="343">M.HVY</text><text class="tk" x="358" y="365.7">MOD</text><text class="tk" x="358" y="388.9">L.MOD</text><text class="tk" x="358" y="411.5">LGT</text><text class="tk" x="358" y="434.5">T.LGT</text><text class="tk" x="358" y="457.4">TRC</text><text class="tk" x="358" y="475.9">NONE</text><g class="ax"><path d="M39.7 319.5h5.3M39.7 329.5h5.3M39.7 341.5h5.3M39.7 353.5h5.3M39.7 365.5h5.3M39.7 377.5h5.3M39.7 389.5h5.3M39.7 401.5h5.3M39.7 413.5h5.3M39.7 425.5h5.3M39.7 437.5h5.3M39.7 449.5h5.3M39.7 461.5h5.3M39.7 471.5h5.3" stroke="#000" stroke-width="1" fill="none"/><text class="tk" text-anchor="end" x="39.6" y="322.2">26</text><text class="tk" text-anchor="end" x="39.6" y="332.2">24</text><text class="tk" text-anchor="end" x="39.6" y="344.2">22</text><text class="tk" text-anchor="end" x="39.6" y="356.2">20</text><text class="tk" text-anchor="end" x="39.6" y="368.2">18</text><text class="tk" text-anchor="end" x="39.6" y="380.2">16</text><text class="tk" text-anchor="end" x="39.6" y="392.2">14</text><text class="tk" text-anchor="end" x="39.6" y="404.2">12</text><text class="tk" text-anchor="end" x="39.6" y="416.2">10</text><text class="tk" text-anchor="end" x="39.6" y="428.2">8</text><text class="tk" text-anchor="end" x="39.6" y="440.2">6</text><text class="tk" text-anchor="end" x="39.6" y="452.2">4</text><text class="tk" text-anchor="end" x="39.6" y="464.2">2</text><text class="tk" text-anchor="end" x="39.6" y="471">0</text></g><g class="ax"><path d="M45.5 478.5v11M70.5 478.5v6M95.5 478.5v11M120.5 478.5v6M145.5 478.5v11M170.5 478.5v6M195.5 478.5v11M221.5 478.5v6M246.5 478.5v11M271.5 478.5v6M296.5 478.5v11M321.5 478.5v6M346.5 478.5v11" stroke="#000" stroke-width="1" fill="none"/><text class="tk" x="40.3" y="498.9">19:24</text><text class="tk" x="90.46" y="498.9">19:44</text><text class="tk" x="140.62" y="498.9">20:04</text><text class="tk" x="190.78" y="498.9">20:24</text><text class="tk" x="240.94" y="498.9">20:44</text><text class="tk" x="291.1" y="498.9">21:04</text><text class="tk" x="341.26" y="498.9">21:24</text></g></g>
<g id="p4"><text class="tt" text-anchor="start" x="10" y="521.6">Alt (1000ft MSL)</text><text class="tb" text-anchor="middle" x="196" y="521.6">Drop Size</text><text class="tt" text-anchor="end" x="382" y="521.6">Drop Size(microns)</text><rect x="45" y="524" width="302" height="161.5" fill="#00007f"/><rect x="45" y="681.7" width="302" height="3.8" fill="#000"/><rect x="45" y="656.09" width="1.99" height="20.69" fill="#3cc8f0"/><rect x="46.84" y="656.55" width="2.91" height="20.23" fill="#a00000"/><rect x="49.6" y="656.09" width="2.45" height="20.69" fill="#aaff5a"/><rect x="51.9" y="657.62" width="2.45" height="19.15" fill="#ffdc00"/><rect x="54.19" y="657.16" width="1.38" height="19.61" fill="#800000"/><rect x="55.42" y="658.08" width="1.68" height="18.69" fill="#78ff82"/><rect x="56.95" y="658.08" width="2.75" height="18.69" fill="#78ff82"/><rect x="59.56" y="658.08" width="2.45" height="18.69" fill="#ffaa00"/><rect x="61.86" y="656.09" width="4.75" height="20.69" fill="#a00000"/><rect x="67.98" y="656.09" width="3.98" height="20.69" fill="#0064ff"/><rect x="71.82" y="656.09" width="4.75" height="20.69" fill="#ffaa00"/><rect x="76.41" y="656.09" width="3.98" height="20.69" fill="#28dce6"/><rect x="80.24" y="656.09" width="2.45" height="20.69" fill="#800000"/><rect x="84.53" y="656.09" width="1.38" height="20.69" fill="#a08282"/><rect x="85.76" y="656.09" width="3.83" height="20.69" fill="#1e50f0"/><rect x="89.44" y="658.08" width="2.45" height="18.69" fill="#ffdc00"/><rect x="91.74" y="656.86" width="3.98" height="19.92" fill="#f05000"/><rect x="95.57" y="656.09" width="2.45" height="20.69" fill="#800000"/><rect x="97.87" y="656.09" width="2.45" height="20.69" fill="#e61e00"/><rect x="100.16" y="657.16" width="4.75" height="19.61" fill="#ffdc00"/><rect x="104.76" y="656.55" width="2.45" height="20.23" fill="#a00000"/><rect x="107.06" y="656.09" width="3.98" height="20.69" fill="#3cc8f0"/><rect x="110.89" y="656.55" width="3.98" height="20.23" fill="#e61e00"/><rect x="114.72" y="658.08" width="2.45" height="18.69" fill="#ff9600"/><rect x="117.02" y="658.39" width="3.21" height="18.39" fill="#d20a00"/><rect x="120.08" y="658.08" width="2.45" height="18.69" fill="#1e50f0"/><rect x="122.38" y="658.08" width="2.45" height="18.69" fill="#a08282"/><rect x="124.68" y="659.61" width="3.98" height="17.16" fill="#78ff82"/><rect x="128.51" y="658.69" width="1.68" height="18.08" fill="#ffaa00"/><rect x="130.04" y="658.69" width="3.21" height="18.08" fill="#800000"/><rect x="133.11" y="658.08" width="4.75" height="18.69" fill="#ffdc00"/><rect x="137.71" y="657.62" width="3.21" height="19.15" fill="#32aafa"/><rect x="140.77" y="658.08" width="3.98" height="18.69" fill="#e61e00"/><rect x="144.6" y="656.09" width="5.51" height="20.69" fill="#50ffbe"/><rect x="149.96" y="657.62" width="5.51" height="19.15" fill="#dcff1e"/><rect x="155.33" y="657.16" width="2.45" height="19.61" fill="#ff9600"/><rect x="157.63" y="658.08" width="2.45" height="18.69" fill="#3cc8f0"/><rect x="159.92" y="658.08" width="3.98" height="18.69" fill="#f05000"/><rect x="163.76" y="658.69" width="5.51" height="18.08" fill="#d20a00"/><rect x="169.12" y="657.16" width="6.28" height="19.61" fill="#50ffbe"/><rect x="175.25" y="658.39" width="2.45" height="18.39" fill="#a00000"/><rect x="177.55" y="658.08" width="5.51" height="18.69" fill="#32aafa"/><rect x="182.91" y="658.69" width="2.45" height="18.08" fill="#400040"/><rect x="188.27" y="658.69" width="4.75" height="18.08" fill="#d20a00"/><rect x="192.87" y="659.92" width="2.45" height="16.86" fill="#ff9600"/><rect x="195.17" y="660.69" width="1.99" height="16.09" fill="#ffdc00"/><rect x="195" y="659.92" width="1.38" height="16.86" fill="#ffaa00"/><rect x="196.23" y="659.92" width="1.99" height="16.86" fill="#ffdc00"/><rect x="198.06" y="659.92" width="3.98" height="16.86" fill="#e61e00"/><rect x="201.9" y="660.69" width="4.75" height="15.78" fill="#b40a00"/><rect x="206.49" y="660.69" width="1.68" height="15.48" fill="#e61e00"/><rect x="211.09" y="662.22" width="2.45" height="12.26" fill="#fa6400"/><rect x="213.39" y="662.98" width="4.75" height="13.02" fill="#ff9600"/><rect x="217.98" y="665.28" width="7.81" height="9.19" fill="#d20a00"/><rect x="217.98" y="662.68" width="7.81" height="2.6" fill="#3cdcc8"/><rect x="225.65" y="664.52" width="3.52" height="9.96" fill="#c80a00"/><rect x="227.95" y="662.98" width="2.75" height="1.84" fill="#ff9600"/><rect x="229.02" y="662.68" width="3.67" height="11.8" fill="#c80a00"/><rect x="232.54" y="659.15" width="3.98" height="15.32" fill="#e61e00"/><rect x="238.37" y="658.39" width="2.75" height="2.3" fill="#ffdc00"/><rect x="240.97" y="656.86" width="6.28" height="19.15" fill="#f04600"/><rect x="247.1" y="659.92" width="4.75" height="12.26" fill="#ffa000"/><rect x="247.1" y="672.18" width="4.75" height="2.3" fill="#a00000"/><rect x="251.7" y="658.39" width="6.28" height="16.09" fill="#aa0000"/><rect x="257.83" y="656.86" width="4.75" height="18.39" fill="#dc1400"/><rect x="262.42" y="656.09" width="4.75" height="18.39" fill="#a00000"/><rect x="267.02" y="656.09" width="4.75" height="18.85" fill="#e61e00"/><rect x="271.62" y="656.55" width="2.45" height="17.93" fill="#a00000"/><rect x="273.92" y="657.62" width="2.14" height="14.56" fill="#32dcdc"/><rect x="278.97" y="655.32" width="1.99" height="19.15" fill="#ff9600"/><rect x="280.81" y="656.86" width="4.75" height="17.62" fill="#f03200"/><rect x="285.41" y="656.09" width="5.51" height="19.92" fill="#28e6e6"/><rect x="290.77" y="656.55" width="3.98" height="18.39" fill="#e67814"/><rect x="294.6" y="656.09" width="1.68" height="18.85" fill="#78ff82"/><rect x="296.13" y="656.09" width="4.75" height="19.46" fill="#d20a00"/><rect x="300.73" y="656.09" width="3.21" height="19.46" fill="#a00000"/><rect x="303.8" y="656.86" width="5.51" height="19.92" fill="#e6fa1e"/><rect x="309.16" y="656.09" width="4.75" height="19.46" fill="#fa5a00"/><rect x="313.76" y="656.55" width="2.45" height="19" fill="#e61e00"/><rect x="316.05" y="656.55" width="3.21" height="19" fill="#ffbe00"/><rect x="319.12" y="658.39" width="4.75" height="17.16" fill="#aa0000"/><rect x="323.72" y="657.62" width="6.28" height="18.54" fill="#c80a00"/><rect x="329.85" y="656.09" width="6.28" height="20.07" fill="#a00000"/><rect x="335.97" y="656.86" width="4.75" height="19.61" fill="#ff9600"/><rect x="340.57" y="656.09" width="3.98" height="20.38" fill="#e6fa28"/><rect x="344.4" y="657.62" width="2.75" height="18.85" fill="#ffaa00"/><rect x="350" y="524" width="5.8" height="165.8" fill="url(#gjet)"/><g class="ax"><path d="M357 526.2h6.4M357 551.4h6.4M357 578.4h6.4M357 605.4h6.4M357 632.4h6.4M357 659.4h6.4M357 684.2h6.4" stroke="#000" stroke-width="1" fill="none"/><text class="tk" x="363.5" y="528.9">60</text><text class="tk" x="363.5" y="554.1">50</text><text class="tk" x="363.5" y="581.1">40</text><text class="tk" x="363.5" y="608.1">30</text><text class="tk" x="363.5" y="635.1">20</text><text class="tk" x="363.5" y="662.1">10</text><text class="tk" x="363.5" y="684.1">0</text></g><g class="ax"><path d="M39.7 526.5h5.3M39.7 536.5h5.3M39.7 548.5h5.3M39.7 560.5h5.3M39.7 572.5h5.3M39.7 584.5h5.3M39.7 596.5h5.3M39.7 608.5h5.3M39.7 620.5h5.3M39.7 632.5h5.3M39.7 644.5h5.3M39.7 656.5h5.3M39.7 668.5h5.3M39.7 678.5h5.3" stroke="#000" stroke-width="1" fill="none"/><text class="tk" text-anchor="end" x="39.6" y="529.2">26</text><text class="tk" text-anchor="end" x="39.6" y="539.2">24</text><text class="tk" text-anchor="end" x="39.6" y="551.2">22</text><text class="tk" text-anchor="end" x="39.6" y="563.2">20</text><text class="tk" text-anchor="end" x="39.6" y="575.2">18</text><text class="tk" text-anchor="end" x="39.6" y="587.2">16</text><text class="tk" text-anchor="end" x="39.6" y="599.2">14</text><text class="tk" text-anchor="end" x="39.6" y="611.2">12</text><text class="tk" text-anchor="end" x="39.6" y="623.2">10</text><text class="tk" text-anchor="end" x="39.6" y="635.2">8</text><text class="tk" text-anchor="end" x="39.6" y="647.2">6</text><text class="tk" text-anchor="end" x="39.6" y="659.2">4</text><text class="tk" text-anchor="end" x="39.6" y="671.2">2</text><text class="tk" text-anchor="end" x="39.6" y="678">0</text></g><g class="ax"><path d="M45.5 685.5v11M70.5 685.5v6M95.5 685.5v11M120.5 685.5v6M145.5 685.5v11M170.5 685.5v6M195.5 685.5v11M221.5 685.5v6M246.5 685.5v11M271.5 685.5v6M296.5 685.5v11M321.5 685.5v6M346.5 685.5v11" stroke="#000" stroke-width="1" fill="none"/><text class="tk" x="40.3" y="705.9">19:24</text><text class="tk" x="90.46" y="705.9">19:44</text><text class="tk" x="140.62" y="705.9">20:04</text><text class="tk" x="190.78" y="705.9">20:24</text><text class="tk" x="240.94" y="705.9">20:44</text><text class="tk" x="291.1" y="705.9">21:04</text><text class="tk" x="341.26" y="705.9">21:24</text></g></g>
<g id="p5"><text class="tt" text-anchor="start" x="402" y="17.6">Alt (1000ft MSL)</text><rect x="437" y="20" width="302" height="132.5" fill="#000"/><polygon points="437.5,146.2 437.5,127.3 440.01,127.3 440.01,128.2 442.52,128.2 442.52,127.8 445.02,127.8 445.02,127.3 447.53,127.3 447.53,126.7 450.04,126.7 450.04,127.3 452.55,127.3 452.55,127.8 455.06,127.8 455.06,128.2 457.57,128.2 457.57,128.2 460.07,128.2 460.07,127.8 462.58,127.8 462.58,128.2 465.09,128.2 465.09,127.3 467.6,127.3 467.6,128.2 470.11,128.2 470.11,127.3 472.62,127.3 472.62,128.2 475.12,128.2 475.12,128.2 477.63,128.2 477.63,126.7 480.14,126.7 480.14,127.8 482.65,127.8 482.65,127.3 485.16,127.3 485.16,128.2 487.67,128.2 487.67,126.7 490.18,126.7 490.18,127.3 492.68,127.3 492.68,127.3 495.19,127.3 495.19,127.3 497.7,127.3 497.7,127.8 500.21,127.8 500.21,128.2 502.72,128.2 502.72,126.7 505.23,126.7 505.23,129.9 507.73,129.9 507.73,128.4 510.24,128.4 510.24,129 512.75,129 512.75,129.9 515.26,129.9 515.26,129.9 517.77,129.9 517.77,129.9 520.27,129.9 520.27,129.5 522.78,129.5 522.78,128.4 525.29,128.4 525.29,129.9 527.8,129.9 527.8,128.4 530.31,128.4 530.31,129 532.82,129 532.82,129 535.32,129 535.33,129 537.83,129 537.83,128.4 540.34,128.4 540.34,128.4 542.85,128.4 542.85,129.9 545.36,129.9 545.36,129.5 547.87,129.5 547.87,129.9 550.38,129.9 550.38,128.4 552.88,128.4 552.88,128.4 555.39,128.4 555.39,129.5 557.9,129.5 557.9,129 560.41,129 560.41,129.9 562.92,129.9 562.92,129.9 565.42,129.9 565.42,129.9 567.93,129.9 567.93,129.9 570.44,129.9 570.44,129 572.95,129 572.95,129 575.46,129 575.46,129.5 577.97,129.5 577.97,129.9 580.48,129.9 580.48,129.9 582.98,129.9 582.98,129.5 585.49,129.5 585.49,129.9 588,129.9 588,129 590.51,129 590.51,129.9 593.02,129.9 593.02,129 595.52,129 595.52,129.9 598.03,129.9 598.03,131.29 600.54,131.29 600.54,131.95 603.05,131.95 603.05,131.59 605.56,131.59 605.56,132.2 608.07,132.2 608.07,131.17 610.57,131.17 610.58,132.3 613.08,132.3 613.08,132.28 615.59,132.28 615.59,131.71 618.1,131.71 618.1,131.01 620.61,131.01 620.61,131.47 623.12,131.47 623.12,131.81 625.62,131.81 625.62,128.4 628.13,128.4 628.13,129 630.64,129 630.64,129 633.15,129 633.15,128.4 635.66,128.4 635.66,129 638.17,129 638.17,129 640.67,129 640.67,129 643.18,129 643.18,129 645.69,129 645.69,129 648.2,129 648.2,128.2 650.71,128.2 650.71,127.7 653.22,127.7 653.22,127.1 655.73,127.1 655.73,128.2 658.23,128.2 658.23,128.2 660.74,128.2 660.74,127.7 663.25,127.7 663.25,127.7 665.76,127.7 665.76,127.7 668.27,127.7 668.27,128.2 670.77,128.2 670.77,128.6 673.28,128.6 673.28,128.2 675.79,128.2 675.79,127.7 678.3,127.7 678.3,128.2 680.81,128.2 680.81,127.7 683.32,127.7 683.32,127.7 685.82,127.7 685.83,127.7 688.33,127.7 688.33,127.1 690.84,127.1 690.84,127.7 693.35,127.7 693.35,127.1 695.86,127.1 695.86,127.7 698.37,127.7 698.37,128.6 700.88,128.6 700.88,128.2 703.38,128.2 703.38,128.2 705.89,128.2 705.89,127.1 708.4,127.1 708.4,128.2 710.91,128.2 710.91,127.7 713.42,127.7 713.42,128.6 715.93,128.6 715.92,128.6 718.43,128.6 718.43,127.7 720.94,127.7 720.94,128.6 723.45,128.6 723.45,127.1 725.96,127.1 725.96,127.1 728.47,127.1 728.47,127.7 730.98,127.7 730.98,127.1 733.48,127.1 733.48,127.1 735.99,127.1 735.99,127.7 738.5,127.7 738.5,146.2" fill="#fff"/><rect x="630.4" y="134.9" width="2.7" height="11.5" fill="#000"/><rect x="594.66" y="143.9" width="12.26" height="1" fill="#000"/><rect x="609.98" y="143.9" width="17.62" height="1" fill="#000"/><rect x="633.74" y="143.9" width="9.96" height="1" fill="#000"/><rect x="645.99" y="143.9" width="3.06" height="1" fill="#000"/><rect x="654.42" y="143.9" width="12.26" height="1" fill="#000"/><rect x="672.81" y="143.9" width="19.15" height="1" fill="#000"/><rect x="694.26" y="143.9" width="7.66" height="1" fill="#000"/><rect x="703.46" y="143.9" width="22.22" height="1" fill="#000"/><rect x="734.1" y="143.9" width="2.3" height="1" fill="#000"/><rect x="505.95" y="145.2" width="4.6" height="1" fill="#000"/><rect x="568.78" y="145.2" width="18.39" height="1" fill="#000"/><rect x="449.3" y="120.5" width="2.6" height="1.1" fill="#fff"/><rect x="499.3" y="119.7" width="2.6" height="1.1" fill="#fff"/><rect x="532" y="103.5" width="2.6" height="1.1" fill="#fff"/><rect x="549.3" y="94.3" width="2.6" height="1.1" fill="#fff"/><rect x="549.3" y="97.1" width="2.6" height="1.1" fill="#fff"/><rect x="564.7" y="89" width="2.6" height="1.1" fill="#fff"/><rect x="600.2" y="83" width="2.6" height="1.1" fill="#fff"/><rect x="667.9" y="112" width="2.6" height="1.1" fill="#fff"/><rect x="678" y="118.9" width="2.6" height="1.1" fill="#fff"/><g class="ax"><path d="M431.7 22.25h5.3M431.7 47.25h5.3M431.7 74.4h5.3M431.7 101.2h5.3M431.7 128.2h5.3M431.7 153h5.3" stroke="#000" stroke-width="1" fill="none"/><text class="tk" text-anchor="end" x="431.6" y="24.95">25</text><text class="tk" text-anchor="end" x="431.6" y="49.95">20</text><text class="tk" text-anchor="end" x="431.6" y="77.1">15</text><text class="tk" text-anchor="end" x="431.6" y="103.9">10</text><text class="tk" text-anchor="end" x="431.6" y="130.9">5</text><text class="tk" text-anchor="end" x="431.6" y="152.8">0</text></g><g class="ax"><path d="M437.5 152.5v11M462.5 152.5v6M487.5 152.5v11M512.5 152.5v6M537.5 152.5v11M562.5 152.5v6M587.5 152.5v11M613.5 152.5v6M638.5 152.5v11M663.5 152.5v6M688.5 152.5v11M713.5 152.5v6M738.5 152.5v11" stroke="#000" stroke-width="1" fill="none"/><text class="tk" x="432.3" y="172.9">19:24</text><text class="tk" x="482.46" y="172.9">19:44</text><text class="tk" x="532.62" y="172.9">20:04</text><text class="tk" x="582.78" y="172.9">20:24</text><text class="tk" x="632.94" y="172.9">20:44</text><text class="tk" x="683.1" y="172.9">21:04</text><text class="tk" x="733.26" y="172.9">21:24</text></g></g>
<g id="p6"><text class="tt" text-anchor="start" x="402" y="195.6">Alt (1000ft MSL)</text><text class="tt" text-anchor="end" x="774" y="195.6">LWC(g/m3)</text><rect x="437" y="198" width="302" height="132.5" fill="#000"/><rect x="437.5" y="303.7" width="301" height="20" fill="url(#glwc)"/><rect x="440.01" y="305.36" width="2.51" height="17.5" fill="#961212" opacity="0.05"/><rect x="442.52" y="306.64" width="2.51" height="17.5" fill="#961212" opacity="0.03"/><rect x="445.02" y="306.35" width="2.51" height="17.5" fill="#961212" opacity="0.04"/><rect x="447.53" y="305.81" width="2.51" height="17.5" fill="#961212" opacity="0.06"/><rect x="455.06" y="305.65" width="2.51" height="17.5" fill="#961212" opacity="0.05"/><rect x="457.57" y="306.6" width="2.51" height="17.5" fill="#961212" opacity="0.05"/><rect x="460.07" y="306.79" width="2.51" height="17.5" fill="#961212" opacity="0.05"/><rect x="462.58" y="305.03" width="2.51" height="17.5" fill="#961212" opacity="0.05"/><rect x="465.09" y="305.52" width="2.51" height="17.5" fill="#961212" opacity="0.05"/><rect x="467.6" y="305.44" width="2.51" height="17.5" fill="#961212" opacity="0.12"/><rect x="470.11" y="305.24" width="2.51" height="17.5" fill="#961212" opacity="0.05"/><rect x="472.62" y="306.99" width="2.51" height="17.5" fill="#961212" opacity="0.05"/><rect x="475.12" y="306.83" width="2.51" height="17.5" fill="#961212" opacity="0.05"/><rect x="477.63" y="305.09" width="2.51" height="17.5" fill="#961212" opacity="0.13"/><rect x="480.14" y="306.88" width="2.51" height="17.5" fill="#961212" opacity="0.18"/><rect x="482.65" y="305.52" width="2.51" height="17.5" fill="#961212" opacity="0.34"/><rect x="485.16" y="306.86" width="2.51" height="17.5" fill="#961212" opacity="0.05"/><rect x="487.67" y="306.06" width="2.51" height="17.5" fill="#961212" opacity="0.13"/><rect x="490.18" y="305.89" width="2.51" height="17.5" fill="#961212" opacity="0.05"/><rect x="492.68" y="305.54" width="2.51" height="17.5" fill="#961212" opacity="0.16"/><rect x="495.19" y="306.99" width="2.51" height="17.5" fill="#961212" opacity="0.24"/><rect x="497.7" y="305.04" width="2.51" height="17.5" fill="#961212" opacity="0.05"/><rect x="500.21" y="306.96" width="2.51" height="17.5" fill="#961212" opacity="0.05"/><rect x="502.72" y="305.49" width="2.51" height="17.5" fill="#961212" opacity="0.06"/><rect x="517.77" y="306.94" width="2.51" height="17.5" fill="#961212" opacity="0.05"/><rect x="530.31" y="306.46" width="2.51" height="17.5" fill="#961212" opacity="0.05"/><rect x="535.33" y="306.96" width="2.51" height="17.5" fill="#961212" opacity="0.06"/><rect x="537.83" y="305.03" width="2.51" height="17.5" fill="#961212" opacity="0.04"/><rect x="540.34" y="306.76" width="2.51" height="17.5" fill="#961212" opacity="0.04"/><rect x="547.87" y="305.76" width="2.51" height="17.5" fill="#961212" opacity="0.05"/><rect x="552.88" y="306.2" width="2.51" height="17.5" fill="#961212" opacity="0.13"/><rect x="555.39" y="305.09" width="2.51" height="17.5" fill="#961212" opacity="0.06"/><rect x="570.44" y="305.65" width="2.51" height="17.5" fill="#961212" opacity="0.13"/><rect x="575.46" y="305.44" width="2.51" height="17.5" fill="#961212" opacity="0.11"/><rect x="588" y="305.5" width="2.51" height="17.5" fill="#961212" opacity="0.05"/><rect x="590.51" y="305.18" width="2.51" height="17.5" fill="#961212" opacity="0.08"/><rect x="593.02" y="305.29" width="2.51" height="17.5" fill="#961212" opacity="0.09"/><rect x="595.52" y="305.79" width="2.51" height="17.5" fill="#961212" opacity="0.03"/><rect x="605.56" y="306.71" width="2.51" height="17.5" fill="#961212" opacity="0.06"/><rect x="610.58" y="306.57" width="2.51" height="17.5" fill="#961212" opacity="0.05"/><rect x="615.59" y="306.44" width="2.51" height="17.5" fill="#961212" opacity="0.03"/><rect x="628.13" y="306.43" width="2.51" height="17.5" fill="#961212" opacity="0.14"/><rect x="635.66" y="306.01" width="2.51" height="17.5" fill="#961212" opacity="0.09"/><rect x="638.17" y="306.51" width="2.51" height="17.5" fill="#961212" opacity="0.17"/><rect x="640.67" y="306.63" width="2.51" height="17.5" fill="#961212" opacity="0.05"/><rect x="645.69" y="306.6" width="2.51" height="17.5" fill="#961212" opacity="0.09"/><rect x="648.2" y="306.91" width="2.51" height="17.5" fill="#961212" opacity="0.1"/><rect x="650.71" y="305.17" width="2.51" height="17.5" fill="#961212" opacity="0.07"/><rect x="655.73" y="306.92" width="2.51" height="17.5" fill="#961212" opacity="0.07"/><rect x="668.27" y="305.49" width="2.51" height="17.5" fill="#961212" opacity="0.03"/><rect x="678.3" y="306.8" width="2.51" height="17.5" fill="#961212" opacity="0.17"/><rect x="683.32" y="306.49" width="2.51" height="17.5" fill="#961212" opacity="0.03"/><rect x="688.33" y="306.69" width="2.51" height="17.5" fill="#961212" opacity="0.13"/><rect x="693.35" y="305.46" width="2.51" height="17.5" fill="#961212" opacity="0.11"/><rect x="695.86" y="305.92" width="2.51" height="17.5" fill="#961212" opacity="0.07"/><rect x="698.37" y="305.15" width="2.51" height="17.5" fill="#961212" opacity="0.14"/><rect x="700.88" y="305.57" width="2.51" height="17.5" fill="#961212" opacity="0.17"/><rect x="705.89" y="305.4" width="2.51" height="17.5" fill="#961212" opacity="0.07"/><rect x="708.4" y="305.66" width="2.51" height="17.5" fill="#961212" opacity="0.06"/><rect x="710.91" y="306.39" width="2.51" height="17.5" fill="#961212" opacity="0.08"/><rect x="713.42" y="305.27" width="2.51" height="17.5" fill="#961212" opacity="0.06"/><rect x="720.94" y="305.2" width="2.51" height="17.5" fill="#961212" opacity="0.19"/><rect x="728.47" y="305.57" width="2.51" height="17.5" fill="#961212" opacity="0.1"/><rect x="733.48" y="306.99" width="2.51" height="17.5" fill="#961212" opacity="0.12"/><rect x="735.99" y="305.62" width="2.51" height="17.5" fill="#961212" opacity="0.04"/><rect x="742" y="197.8" width="6.2" height="137" fill="url(#gred)"/><g class="ax"><path d="M749 200.7h6.4M749 266.6h6.4M749 332.5h6.4" stroke="#000" stroke-width="1" fill="none"/><text class="tk" x="755.5" y="203.4">0.2</text><text class="tk" x="755.5" y="269.3">0.1</text><text class="tk" x="755.5" y="332.1">0.0</text></g><g class="ax"><path d="M431.7 200.25h5.3M431.7 225.25h5.3M431.7 252.4h5.3M431.7 279.2h5.3M431.7 306.2h5.3M431.7 331h5.3" stroke="#000" stroke-width="1" fill="none"/><text class="tk" text-anchor="end" x="431.6" y="202.95">25</text><text class="tk" text-anchor="end" x="431.6" y="227.95">20</text><text class="tk" text-anchor="end" x="431.6" y="255.1">15</text><text class="tk" text-anchor="end" x="431.6" y="281.9">10</text><text class="tk" text-anchor="end" x="431.6" y="308.9">5</text><text class="tk" text-anchor="end" x="431.6" y="330.8">0</text></g><g class="ax"><path d="M437.5 330.5v11M462.5 330.5v6M487.5 330.5v11M512.5 330.5v6M537.5 330.5v11M562.5 330.5v6M587.5 330.5v11M613.5 330.5v6M638.5 330.5v11M663.5 330.5v6M688.5 330.5v11M713.5 330.5v6M738.5 330.5v11" stroke="#000" stroke-width="1" fill="none"/><text class="tk" x="432.3" y="350.9">19:24</text><text class="tk" x="482.46" y="350.9">19:44</text><text class="tk" x="532.62" y="350.9">20:04</text><text class="tk" x="582.78" y="350.9">20:24</text><text class="tk" x="632.94" y="350.9">20:44</text><text class="tk" x="683.1" y="350.9">21:04</text><text class="tk" x="733.26" y="350.9">21:24</text></g></g>
<g id="p7"><text class="tt" text-anchor="start" x="402" y="373.6">Alt (1000ft MSL)</text><text class="tt" text-anchor="end" x="774" y="373.6">Temp(K)</text><rect x="437" y="376" width="302" height="132.5" fill="#000"/><rect x="437" y="377.4" width="302" height="127.6" fill="url(#gtemp)"/><g clip-path="url(#ctemp)"><rect x="437" y="377.4" width="2.62" height="127.6" fill="url(#gtempu)" transform="translate(0 -2.48)"/><rect x="442.03" y="377.4" width="2.62" height="127.6" fill="url(#gtempu)" transform="translate(0 -1.26)"/><rect x="444.55" y="377.4" width="2.62" height="127.6" fill="url(#gtempu)" transform="translate(0 -2.54)"/><rect x="449.58" y="377.4" width="2.62" height="127.6" fill="url(#gtempu)" transform="translate(0 2.97)"/><rect x="452.1" y="377.4" width="2.62" height="127.6" fill="url(#gtempu)" transform="translate(0 2.96)"/><rect x="454.62" y="377.4" width="2.62" height="127.6" fill="url(#gtempu)" transform="translate(0 -0.68)"/><rect x="457.13" y="377.4" width="2.62" height="127.6" fill="url(#gtempu)" transform="translate(0 2.5)"/><rect x="459.65" y="377.4" width="2.62" height="127.6" fill="url(#gtempu)" transform="translate(0 2.58)"/><rect x="462.17" y="377.4" width="2.62" height="127.6" fill="url(#gtempu)" transform="translate(0 -2.55)"/><rect x="464.68" y="377.4" width="2.62" height="127.6" fill="url(#gtempu)" transform="translate(0 -2.46)"/><rect x="467.2" y="377.4" width="2.62" height="127.6" fill="url(#gtempu)" transform="translate(0 1.48)"/><rect x="469.72" y="377.4" width="2.62" height="127.6" fill="url(#gtempu)" transform="translate(0 -1.43)"/><rect x="472.23" y="377.4" width="2.62" height="127.6" fill="url(#gtempu)" transform="translate(0 -0.84)"/><rect x="474.75" y="377.4" width="2.62" height="127.6" fill="url(#gtempu)" transform="translate(0 0.62)"/><rect x="477.27" y="377.4" width="2.62" height="127.6" fill="url(#gtempu)" transform="translate(0 0.79)"/><rect x="479.78" y="377.4" width="2.62" height="127.6" fill="url(#gtempu)" transform="translate(0 -1.32)"/><rect x="482.3" y="377.4" width="2.62" height="127.6" fill="url(#gtempu)" transform="translate(0 -2.32)"/><rect x="484.82" y="377.4" width="2.62" height="127.6" fill="url(#gtempu)" transform="translate(0 -0.81)"/><rect x="489.85" y="377.4" width="2.62" height="127.6" fill="url(#gtempu)" transform="translate(0 2.26)"/><rect x="492.37" y="377.4" width="2.62" height="127.6" fill="url(#gtempu)" transform="translate(0 -0.64)"/><rect x="494.88" y="377.4" width="2.62" height="127.6" fill="url(#gtempu)" transform="translate(0 -2.05)"/><rect x="497.4" y="377.4" width="2.62" height="127.6" fill="url(#gtempu)" transform="translate(0 2.7)"/><rect x="499.92" y="377.4" width="2.62" height="127.6" fill="url(#gtempu)" transform="translate(0 1.09)"/><rect x="504.95" y="377.4" width="2.62" height="127.6" fill="url(#gtempu)" transform="translate(0 1.36)"/><rect x="509.98" y="377.4" width="2.62" height="127.6" fill="url(#gtempu)" transform="translate(0 -0.74)"/><rect x="512.5" y="377.4" width="2.62" height="127.6" fill="url(#gtempu)" transform="translate(0 -2.27)"/><rect x="515.02" y="377.4" width="2.62" height="127.6" fill="url(#gtempu)" transform="translate(0 -1.01)"/><rect x="517.53" y="377.4" width="2.62" height="127.6" fill="url(#gtempu)" transform="translate(0 -1.05)"/><rect x="520.05" y="377.4" width="2.62" height="127.6" fill="url(#gtempu)" transform="translate(0 -0.97)"/><rect x="522.57" y="377.4" width="2.62" height="127.6" fill="url(#gtempu)" transform="translate(0 -0.61)"/><rect x="525.08" y="377.4" width="2.62" height="127.6" fill="url(#gtempu)" transform="translate(0 2.64)"/><rect x="527.6" y="377.4" width="2.62" height="127.6" fill="url(#gtempu)" transform="translate(0 -1.83)"/><rect x="530.12" y="377.4" width="2.62" height="127.6" fill="url(#gtempu)" transform="translate(0 -2.93)"/><rect x="532.63" y="377.4" width="2.62" height="127.6" fill="url(#gtempu)" transform="translate(0 1.44)"/><rect x="535.15" y="377.4" width="2.62" height="127.6" fill="url(#gtempu)" transform="translate(0 -1.48)"/><rect x="537.67" y="377.4" width="2.62" height="127.6" fill="url(#gtempu)" transform="translate(0 -2.61)"/><rect x="540.18" y="377.4" width="2.62" height="127.6" fill="url(#gtempu)" transform="translate(0 -0.66)"/><rect x="542.7" y="377.4" width="2.62" height="127.6" fill="url(#gtempu)" transform="translate(0 2.22)"/><rect x="545.22" y="377.4" width="2.62" height="127.6" fill="url(#gtempu)" transform="translate(0 -2.54)"/><rect x="547.73" y="377.4" width="2.62" height="127.6" fill="url(#gtempu)" transform="translate(0 2.55)"/><rect x="550.25" y="377.4" width="2.62" height="127.6" fill="url(#gtempu)" transform="translate(0 1.53)"/><rect x="552.77" y="377.4" width="2.62" height="127.6" fill="url(#gtempu)" transform="translate(0 2.13)"/><rect x="555.28" y="377.4" width="2.62" height="127.6" fill="url(#gtempu)" transform="translate(0 -1.32)"/><rect x="557.8" y="377.4" width="2.62" height="127.6" fill="url(#gtempu)" transform="translate(0 -2.69)"/><rect x="560.32" y="377.4" width="2.62" height="127.6" fill="url(#gtempu)" transform="translate(0 0.97)"/><rect x="562.83" y="377.4" width="2.62" height="127.6" fill="url(#gtempu)" transform="translate(0 0.81)"/><rect x="565.35" y="377.4" width="2.62" height="127.6" fill="url(#gtempu)" transform="translate(0 -2.11)"/><rect x="567.87" y="377.4" width="2.62" height="127.6" fill="url(#gtempu)" transform="translate(0 2.83)"/><rect x="572.9" y="377.4" width="2.62" height="127.6" fill="url(#gtempu)" transform="translate(0 -1.11)"/><rect x="575.42" y="377.4" width="2.62" height="127.6" fill="url(#gtempu)" transform="translate(0 1.64)"/><rect x="577.93" y="377.4" width="2.62" height="127.6" fill="url(#gtempu)" transform="translate(0 1.71)"/><rect x="582.97" y="377.4" width="2.62" height="127.6" fill="url(#gtempu)" transform="translate(0 -2.83)"/><rect x="585.48" y="377.4" width="2.62" height="127.6" fill="url(#gtempu)" transform="translate(0 1.57)"/><rect x="590.52" y="377.4" width="2.62" height="127.6" fill="url(#gtempu)" transform="translate(0 2.25)"/><rect x="595.55" y="377.4" width="2.62" height="127.6" fill="url(#gtempu)" transform="translate(0 -1.78)"/><rect x="598.07" y="377.4" width="2.62" height="127.6" fill="url(#gtempu)" transform="translate(0 -2.52)"/><rect x="600.58" y="377.4" width="2.62" height="127.6" fill="url(#gtempu)" transform="translate(0 2.6)"/><rect x="605.62" y="377.4" width="2.62" height="127.6" fill="url(#gtempu)" transform="translate(0 0.69)"/><rect x="608.13" y="377.4" width="2.62" height="127.6" fill="url(#gtempu)" transform="translate(0 -2.17)"/><rect x="610.65" y="377.4" width="2.62" height="127.6" fill="url(#gtempu)" transform="translate(0 2.22)"/><rect x="615.68" y="377.4" width="2.62" height="127.6" fill="url(#gtempu)" transform="translate(0 2.47)"/><rect x="620.72" y="377.4" width="2.62" height="127.6" fill="url(#gtempu)" transform="translate(0 -1.98)"/><rect x="625.75" y="377.4" width="2.62" height="127.6" fill="url(#gtempu)" transform="translate(0 -1.31)"/><rect x="628.27" y="377.4" width="2.62" height="127.6" fill="url(#gtempu)" transform="translate(0 -1.47)"/><rect x="630.78" y="377.4" width="2.62" height="127.6" fill="url(#gtempu)" transform="translate(0 1.43)"/><rect x="633.3" y="377.4" width="2.62" height="127.6" fill="url(#gtempu)" transform="translate(0 0.92)"/><rect x="638.33" y="377.4" width="2.62" height="127.6" fill="url(#gtempu)" transform="translate(0 -1.57)"/><rect x="643.37" y="377.4" width="2.62" height="127.6" fill="url(#gtempu)" transform="translate(0 1.01)"/><rect x="645.88" y="377.4" width="2.62" height="127.6" fill="url(#gtempu)" transform="translate(0 -2.28)"/><rect x="648.4" y="377.4" width="2.62" height="127.6" fill="url(#gtempu)" transform="translate(0 0.86)"/><rect x="650.92" y="377.4" width="2.62" height="127.6" fill="url(#gtempu)" transform="translate(0 -2.55)"/><rect x="655.95" y="377.4" width="2.62" height="127.6" fill="url(#gtempu)" transform="translate(0 1.87)"/><rect x="663.5" y="377.4" width="2.62" height="127.6" fill="url(#gtempu)" transform="translate(0 -1)"/><rect x="666.02" y="377.4" width="2.62" height="127.6" fill="url(#gtempu)" transform="translate(0 1.56)"/><rect x="673.57" y="377.4" width="2.62" height="127.6" fill="url(#gtempu)" transform="translate(0 -1.54)"/><rect x="676.08" y="377.4" width="2.62" height="127.6" fill="url(#gtempu)" transform="translate(0 -1.95)"/><rect x="681.12" y="377.4" width="2.62" height="127.6" fill="url(#gtempu)" transform="translate(0 -1.08)"/><rect x="683.63" y="377.4" width="2.62" height="127.6" fill="url(#gtempu)" transform="translate(0 -0.79)"/><rect x="686.15" y="377.4" width="2.62" height="127.6" fill="url(#gtempu)" transform="translate(0 1.86)"/><rect x="688.67" y="377.4" width="2.62" height="127.6" fill="url(#gtempu)" transform="translate(0 -1.79)"/><rect x="691.18" y="377.4" width="2.62" height="127.6" fill="url(#gtempu)" transform="translate(0 -2.88)"/><rect x="693.7" y="377.4" width="2.62" height="127.6" fill="url(#gtempu)" transform="translate(0 2.22)"/><rect x="696.22" y="377.4" width="2.62" height="127.6" fill="url(#gtempu)" transform="translate(0 -0.7)"/><rect x="698.73" y="377.4" width="2.62" height="127.6" fill="url(#gtempu)" transform="translate(0 1.48)"/><rect x="701.25" y="377.4" width="2.62" height="127.6" fill="url(#gtempu)" transform="translate(0 -1.74)"/><rect x="703.77" y="377.4" width="2.62" height="127.6" fill="url(#gtempu)" transform="translate(0 -1.38)"/><rect x="706.28" y="377.4" width="2.62" height="127.6" fill="url(#gtempu)" transform="translate(0 1.51)"/><rect x="713.83" y="377.4" width="2.62" height="127.6" fill="url(#gtempu)" transform="translate(0 -0.84)"/><rect x="716.35" y="377.4" width="2.62" height="127.6" fill="url(#gtempu)" transform="translate(0 1.12)"/><rect x="721.38" y="377.4" width="2.62" height="127.6" fill="url(#gtempu)" transform="translate(0 1.74)"/><rect x="723.9" y="377.4" width="2.62" height="127.6" fill="url(#gtempu)" transform="translate(0 2.09)"/><rect x="726.42" y="377.4" width="2.62" height="127.6" fill="url(#gtempu)" transform="translate(0 -2.44)"/><rect x="728.93" y="377.4" width="2.62" height="127.6" fill="url(#gtempu)" transform="translate(0 2.38)"/><rect x="731.45" y="377.4" width="2.62" height="127.6" fill="url(#gtempu)" transform="translate(0 -0.69)"/><rect x="733.97" y="377.4" width="2.62" height="127.6" fill="url(#gtempu)" transform="translate(0 0.87)"/></g><rect x="437" y="503" width="302" height="2" fill="url(#ggf)"/><rect x="437" y="505" width="302" height="1" fill="#50c800"/><path d="M437.1 493.33H485M484.2 494.4H507.7M506.9 496.21H523.3M522.5 494.4H560.1M559.3 494.77H585.4M584.6 494.52H674.1M673.3 494.15H699.4M698.6 494.58H711.5M710.7 494.15H736.1M735.3 495.78H739.5" stroke="#0a0a0a" stroke-width="1.2" fill="none" shape-rendering="geometricPrecision"/><path d="M437.73 460.21h2.6M440.8 458.48h2.6M444.63 453.49h2.6M447.69 456.56h2.6M449.68 458.48h2.6M453.52 457.14h2.6M458.42 459.06h2.6M462.56 457.14h2.6M464.85 455.22h2.6M467.61 454.64h2.6M469.6 457.14h2.6M472.52 458.48h2.6M474.51 455.89h2.6M477.57 458.48h2.6M479.57 455.89h2.6M482.63 457.14h2.6M484.93 458.48h2.6M487.53 459.06h2.6M489.83 455.22h2.6M492.59 455.89h2.6M494.43 455.22h2.6M497.49 457.14h2.6M499.49 456.56h2.6M502.55 458.48h2.6M504.7 457.14h2.6M507.76 460.21h2.6M509.75 453.49h2.6M512.66 450.32h2.6M515.57 453.97h2.6M518.18 453.49h2.6M520.17 453.97h2.6M522.78 457.14h2.6M525.53 452.81h2.6M527.68 455.89h2.6M530.74 458.48h2.6M532.74 453.97h2.6M535.8 458.48h2.6M537.79 457.14h2.6M541.62 453.97h2.6M545.76 455.89h2.6M547.75 457.81h2.6M550.67 456.56h2.6M552.66 459.06h2.6M555.72 454.64h2.6M557.71 453.97h2.6M560.63 455.22h2.6M562.62 458.48h2.6M565.68 455.22h2.6M567.67 456.56h2.6M570.59 452.24h2.6M574.11 455.22h2.6M577.48 450.89h2.6M580.55 453.49h2.6M582.84 455.89h2.6M585.6 456.56h2.6M587.73 455.22h2.6M590.49 455.89h2.6M593.1 457.14h2.6M595.7 454.64h2.6M598.46 453.49h2.6M600.76 452.24h2.6M603.52 450.89h2.6M605.81 455.22h2.6M608.42 453.49h2.6M610.72 457.14h2.6M613.48 456.56h2.6M615.31 455.89h2.6M618.38 454.64h2.6M620.68 452.24h2.6M623.44 455.22h2.6M625.73 452.81h2.6M628.34 452.24h2.6M630.64 453.49h2.6M633.7 457.14h2.6M635.69 453.49h2.6M638.76 455.22h2.6M640.6 450.89h2.6M643.66 453.49h2.6M645.65 453.49h2.6M648.72 450.89h2.6M650.56 452.81h2.6M653.62 457.14h2.6M655.61 448.97h2.6M658.53 457.81h2.6M660.82 452.81h2.6M663.58 450.89h2.6M666.65 450.32h2.6M668.95 455.22h2.6M671.55 455.89h2.6M673.54 453.49h2.6M676.61 453.97h2.6M678.6 453.49h2.6M681.51 457.81h2.6M683.81 454.64h2.6M686.57 455.89h2.6M688.87 450.89h2.6M691.62 455.22h2.6M693.46 453.97h2.6M696.53 456.56h2.6M699.59 456.18h2.6M703.88 457.14h2.6M706.49 454.64h2.6M708.79 455.89h2.6M711.54 455.89h2.6M713.69 453.97h2.6M716.45 455.22h2.6M718.75 453.97h2.6M721.5 454.64h2.6M723.8 453.49h2.6M726.87 456.56h2.6M728.71 453.49h2.6M731.47 452.24h2.6M733.76 453.97h2.6M736.83 455.22h2.6" stroke="#cc2a14" stroke-width="1.1" fill="none"/><rect x="742" y="375.6" width="6.2" height="137.2" fill="url(#gjet)"/><g class="ax"><path d="M749 378.7h6.4M749 410.2h6.4M749 444.6h6.4M749 478.5h6.4M749 510.5h6.4" stroke="#000" stroke-width="1" fill="none"/><text class="tk" x="755.5" y="381.4">290</text><text class="tk" x="755.5" y="412.9">270</text><text class="tk" x="755.5" y="447.3">250</text><text class="tk" x="755.5" y="481.2">230</text><text class="tk" x="755.5" y="509.7">210</text></g><g class="ax"><path d="M431.7 378h5.3M431.7 410.5h5.3M431.7 444.25h5.3M431.7 478h5.3M431.7 510h5.3" stroke="#000" stroke-width="1" fill="none"/><text class="tk" text-anchor="end" x="431.6" y="380.7">34</text><text class="tk" text-anchor="end" x="431.6" y="413.2">25.5</text><text class="tk" text-anchor="end" x="431.6" y="446.95">17</text><text class="tk" text-anchor="end" x="431.6" y="480.7">8.5</text><text class="tk" text-anchor="end" x="431.6" y="510.2">0</text></g><g class="ax"><path d="M437.5 508.5v11M462.5 508.5v6M487.5 508.5v11M512.5 508.5v6M537.5 508.5v11M562.5 508.5v6M587.5 508.5v11M613.5 508.5v6M638.5 508.5v11M663.5 508.5v6M688.5 508.5v11M713.5 508.5v6M738.5 508.5v11" stroke="#000" stroke-width="1" fill="none"/><text class="tk" x="432.3" y="528.9">19:24</text><text class="tk" x="482.46" y="528.9">19:44</text><text class="tk" x="532.62" y="528.9">20:04</text><text class="tk" x="582.78" y="528.9">20:24</text><text class="tk" x="632.94" y="528.9">20:44</text><text class="tk" x="683.1" y="528.9">21:04</text><text class="tk" x="733.26" y="528.9">21:24</text></g></g>
<g id="p8"><text class="tt" text-anchor="start" x="402" y="551.8">ILW</text><rect x="437" y="554" width="302" height="133" fill="#000"/><path d="M437.5 687V684H440.01V685.5H442.52V685H445.02V685.5H447.53V683.5H450.04V685.8H452.55V685.8H455.06V685.5H457.57V679.5H460.07V682H462.58V685.8H465.09V685.8H467.6V684.5H470.11V674H472.62V683H475.12V685H477.63V681H480.14V685H482.65V685.8H485.16V681H487.67V685.5H490.18V681H492.68V685H495.19V684.5H497.7V685.5H500.21V682H502.72V675H505.23V683H507.73V683.5H510.24V685H512.75V685H515.26V685H517.77V685.8H520.27V682.8H522.78V686H525.29V685H527.8V683.4H530.31V685H532.82V686H535.32V685H537.83V686H540.34V684H542.85V683.4H545.36V684.6H547.87V685H550.38V685H552.88V684.6H555.39V682.8H557.9V686H560.41V685.8H562.92V686H565.42V685H567.93V685.8H570.44V684H572.95V686H575.46V685H577.97V683.4H580.48V686H582.98V685.8H585.49V684H588V686H590.51V685H593.02V684.6H595.52V682.8H598.03V682.8H600.54V682.8H603.05V685H605.56V685.8H608.07V685.8H610.57V685.4H613.08V684H615.59V684H618.1V685.4H620.61V686H623.12V682.8H625.62V683.4H628.13V682.8H630.64V684.6H633.15V684H635.66V685.4H638.17V685H640.67V685.8H643.18V684H645.69V686H648.2V686H650.71V685H653.22V682.8H655.73V683.4H658.23V685H660.74V684.6H663.25V684.6H665.76V684.6H668.27V685H670.77V684.6H673.28V683.4H675.79V686H678.3V685.4H680.81V681.5H683.32V681.5H685.82V686H688.33V686H690.84V685H693.35V681.5H695.86V681.5H698.37V685.8H700.88V684H703.38V684H705.89V684.6H708.4V685H710.91V686H713.42V685H715.93V685.8H718.43V685.4H720.94V683.4H723.45V685.4H725.96V684.6H728.47V686H730.98V685.8H733.48V684H735.99V684H738.5V687Z" fill="#1ef01e"/><g class="ax"><path d="M431.7 556.25h5.3M431.7 621.9h5.3M431.7 688h5.3" stroke="#000" stroke-width="1" fill="none"/><text class="tk" text-anchor="end" x="431.6" y="558.95">2</text><text class="tk" text-anchor="end" x="431.6" y="624.6">1</text><text class="tk" text-anchor="end" x="431.6" y="687.7">0</text></g><g class="ax"><path d="M437.5 687v11M462.5 687v6M487.5 687v11M512.5 687v6M537.5 687v11M562.5 687v6M587.5 687v11M613.5 687v6M638.5 687v11M663.5 687v6M688.5 687v11M713.5 687v6M738.5 687v11" stroke="#000" stroke-width="1" fill="none"/><text class="tk" x="432.3" y="707.4">19:24</text><text class="tk" x="482.46" y="707.4">19:44</text><text class="tk" x="532.62" y="707.4">20:04</text><text class="tk" x="582.78" y="707.4">20:24</text><text class="tk" x="632.94" y="707.4">20:44</text><text class="tk" x="683.1" y="707.4">21:04</text><text class="tk" x="733.26" y="707.4">21:24</text></g></g>
</svg>
<div id="ctl"><h1 class="abs" style="left:23.5px;top:30px;">NIRSS - Local</h1><div class="abs lbl" style="left:78.8px;top:84.8px;">Mode:</div><div class="abs mode" style="left:9px;top:107px;width:88px;background:#aa0000;border-color:#874450;">REALTIME</div><div class="abs mode" style="left:102px;top:107px;width:84px;background:#12a012;border-color:#568a56;">ARCHIVE</div><div class="abs lbl" style="left:45px;top:141.2px;">Display time (UTC)</div><div class="abs tf" style="left:9px;top:165px;width:146px;height:16px;">2012-02-12 21:24:00</div><div class="abs btn go" style="left:161px;top:163px;width:24px;height:21px;"><span style="display:block;margin:2px;border:1px solid #9db3c9;line-height:13.6px;height:15px;">GO</span></div><div class="abs btn" style="left:13px;top:194px;width:32px;height:21px;"><span class="nv">&lt;&lt;&lt;</span></div><div class="abs btn" style="left:50px;top:194px;width:24px;height:21px;"><span class="nv">&lt;&lt;</span></div><div class="abs btn" style="left:79px;top:194px;width:16px;height:21px;"><span class="nv">&lt;</span></div><div class="abs btn" style="left:100px;top:194px;width:16px;height:21px;"><span class="nv">&gt;</span></div><div class="abs btn" style="left:121px;top:194px;width:24px;height:21px;"><span class="nv">&gt;&gt;</span></div><div class="abs btn" style="left:150px;top:194px;width:32px;height:21px;"><span class="nv">&gt;&gt;&gt;</span></div><div class="abs" style="left:19.3px;top:229.5px;font-size:12px;line-height:15px;letter-spacing:0.15px;">Time zoom:</div><div class="abs btn" style="left:104px;top:225px;width:71px;height:23.5px;text-align:left;font-size:12px;line-height:21px;background:linear-gradient(#eef2f6,#e6ecf2);"><span style="position:absolute;left:2.6px;top:1.2px;">2 hrs</span><span class="btn" style="position:absolute;left:50px;top:-1px;width:20px;height:23.5px;"></span><svg style="position:absolute;left:55px;top:8.7px;" width="12" height="7" viewBox="0 0 12 7"><path d="M0.3 0.3h10.4L5.5 5.8z" fill="#2a2a2a"/></svg></div></div>
</div>
</body></html>
